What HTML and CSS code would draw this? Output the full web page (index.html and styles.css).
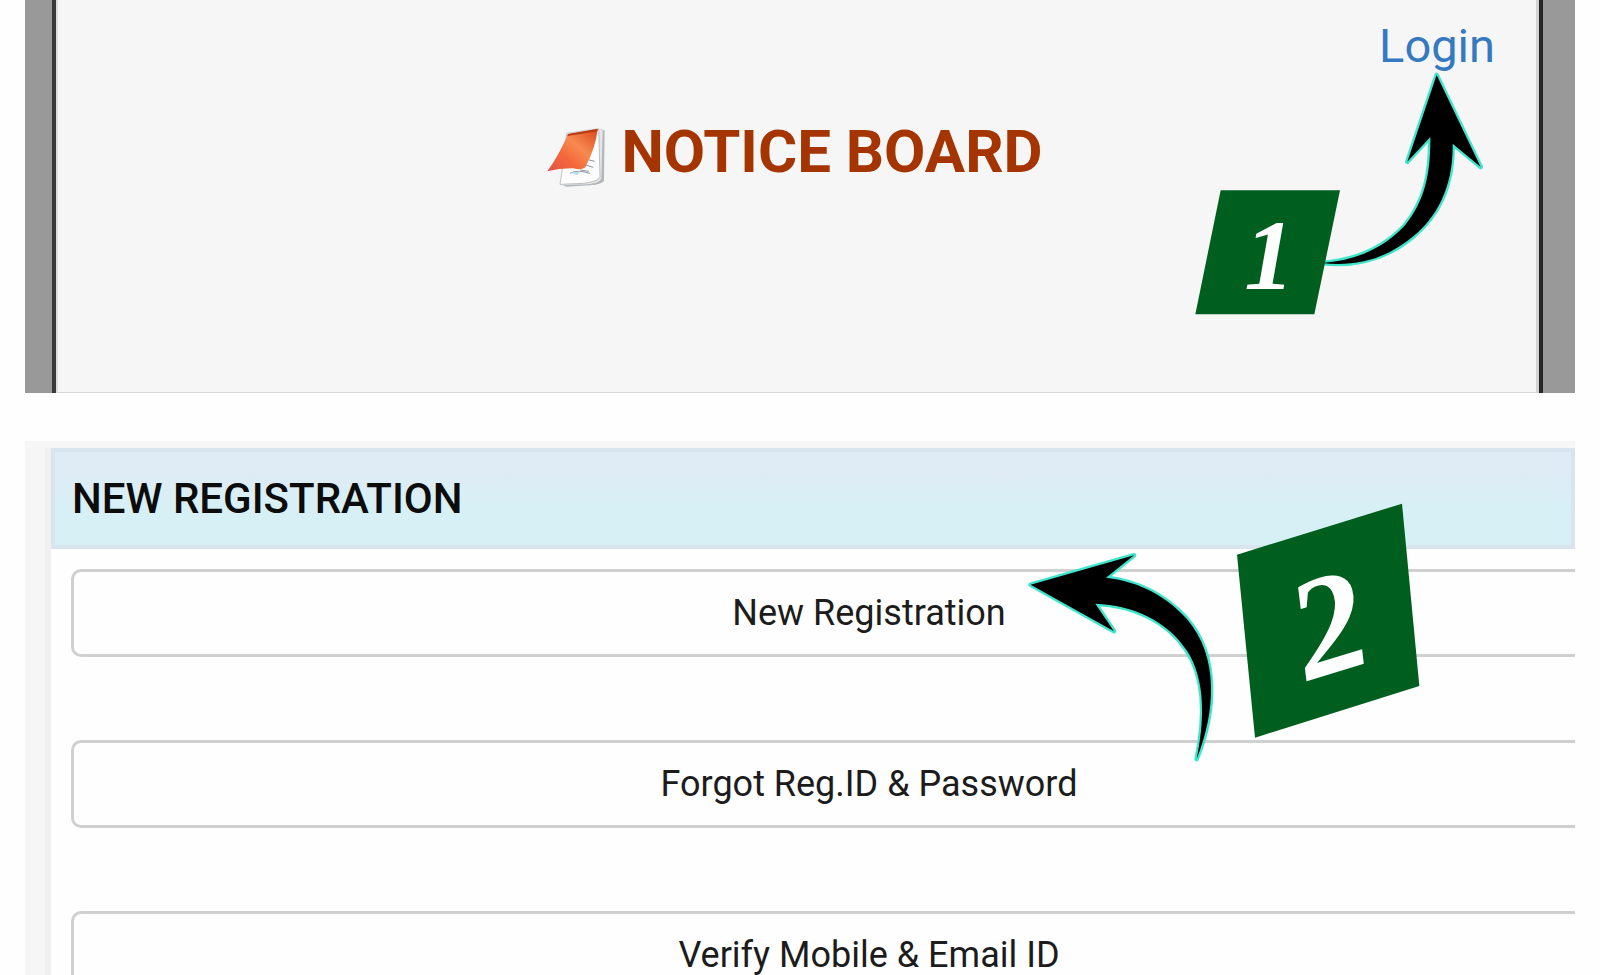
FILE: index.html
```html
<!DOCTYPE html>
<html lang="en">
<head>
<meta charset="utf-8">
<meta name="viewport" content="width=device-width, initial-scale=1">
<title>Notice Board</title>
<link rel="stylesheet" href="styles.css">
</head>
<body>
<main class="page">
  <section class="notice">
    <nav class="notice-nav"><a class="login" href="#login">Login</a></nav>
    <h1 class="notice-title">
      <svg class="pad-icon" viewBox="0 0 225 225" aria-hidden="true">
        <defs>
          <linearGradient id="cover" x1="0" y1="1" x2="1" y2="0">
            <stop offset="0" stop-color="#e0524a"/>
            <stop offset="0.35" stop-color="#f4683a"/>
            <stop offset="0.6" stop-color="#f88a50"/>
            <stop offset="1" stop-color="#d9481c"/>
          </linearGradient>
        </defs>
        <path d="M182 26 L194 32 L192 182 Q188 192 150 196 L80 200 L60 192 Z" fill="#b4b8bc"/>
        <path d="M176 26 L188 30 L184 176 Q180 188 140 193 L62 196 Z" fill="#e4e6e8"/>
        <path d="M80 40 L176 26 L180 172 Q170 186 130 190 L60 193 L68 140 Z" fill="#fcfcfc" stroke="#a8a8a8" stroke-width="2"/>
        <path d="M90 160 Q110 148 150 160 M140 118 L164 124 M134 134 L160 142 M120 150 L146 154" fill="none" stroke="#8d969c" stroke-width="3"/>
        <path d="M92 158 L122 154 L112 166 Z" fill="#b9dcec"/>
        <path d="M84 42 L173 27 Q168 80 136 142 Q124 152 100 145 Q60 144 22 154 Q58 104 84 42 Z" fill="url(#cover)"/>
        <path d="M84 42 L173 27 L172 34 L82 48 Z" fill="#b83a12"/>
      </svg>
      <span>NOTICE BOARD</span>
    </h1>
    <svg class="step step-one" viewBox="30 200 900 750" role="img" aria-label="Step 1">
      <path class="arrow" d="M770 224 L902 500 L818 430 C820 560 770 650 700 708 C620 775 530 800 425 788 C530 780 610 745 675 675 C735 600 752 520 751 410 L682 484 Z"/>
      <path class="badge" d="M122 570 H480 L403 942 H46 Z"/>
      <text class="digit digit-one" x="268" y="865">1</text>
    </svg>
  </section>

  <section class="register">
    <div class="register-body">
      <h2 class="register-title">NEW REGISTRATION</h2>
      <div class="actions">
        <button class="action" type="button">New Registration</button>
        <button class="action" type="button">Forgot Reg.ID &amp; Password</button>
        <button class="action" type="button">Verify Mobile &amp; Email ID</button>
      </div>
    </div>
    <svg class="step step-two" viewBox="60 50 1230 810" role="img" aria-label="Step 2">
      <path class="arrow" d="M92 313 L402 225 L318 292 C425 305 500 350 560 415 C660 530 645 700 590 836 C612 730 620 600 560 510 C500 420 400 375 286 370 L342 453 Z"/>
      <path class="badge" d="M711 223 L1206 70 L1258 617 L765 772 Z"/>
      <text class="digit digit-two" transform="translate(1028 570) rotate(-17)">2</text>
    </svg>
  </section>
</main>
</body>
</html>
```
FILE: styles.css
```css
* { box-sizing: border-box; }

body {
  margin: 0;
  background: #fefefe;
  font-family: Roboto, "Liberation Sans", sans-serif;
}

.page {
  display: flex;
  flex-direction: column;
  gap: 48px;
  height: 100vh;
  padding: 0 25px;
  overflow: hidden;
}

.notice,
.register {
  position: relative;
  flex: none;
}

.notice {
  min-height: 393px;
  padding: 16px 48px 0 4px;
  border-left: 27px solid #999;
  border-right: 32px solid #999;
  background: #f6f6f6;
  box-shadow: inset 4px 0 #3a3a3a, inset -4px 0 #262626, inset 6px 0 #ddd, inset -7px 0 #d4d4d4, inset 0 -1px #d8d8d8;
}

.notice-nav {
  display: flex;
  justify-content: flex-end;
}

.login {
  color: #3579c0;
  font-size: 47px;
  line-height: 60px;
  text-decoration: none;
}

.notice-title {
  display: flex;
  align-items: flex-start;
  justify-content: center;
  gap: 6px;
  margin: 40px 0 0;
  padding-left: 32px;
  color: #a43500;
  font-size: 60px;
  font-weight: 700;
  line-height: 72px;
}

.pad-icon {
  width: 75px;
  height: 75px;
  margin-top: 4px;
}

.register {
  min-height: 534px;
  padding: 7px 0 0 20px;
  overflow: hidden;
  background: #f6f6f6;
}

.register-body {
  border-left: 6px solid #f0f0f0;
  background: #fefefe;
}

.register-title {
  margin: 0;
  padding: 24px 17px;
  border: 4px solid #d8e5ee;
  background: linear-gradient(#dfebf5 20%, #d7f0f5 60%);
  color: #0c0c0c;
  font-size: 42px;
  font-weight: 500;
  line-height: 45px;
}

.actions {
  display: grid;
  gap: 83px;
  margin-right: -92px;
  padding: 20px 0 40px 20px;
}

.action {
  height: 88px;
  padding: 0;
  border: 3px solid #d0d0d0;
  border-radius: 10px;
  background: #fefefe;
  color: #1c1c1c;
  font-family: inherit;
  font-size: 36px;
  line-height: 36px;
}

.step {
  position: absolute;
  pointer-events: none;
}

.step-one {
  top: 67px;
  right: 53px;
  width: 300px;
}

.step-two {
  top: 56px;
  right: 145px;
  width: 410px;
}

.arrow {
  fill: #000;
  stroke: #3fe5cb;
  stroke-width: 14px;
  stroke-linejoin: round;
  paint-order: stroke;
}

.badge { fill: #005f1f; }

.digit {
  fill: #fefefe;
  font-family: "Liberation Serif", serif;
  font-style: italic;
  font-weight: 700;
  text-anchor: middle;
}

.digit-one { font-size: 300px; }

.digit-two { font-size: 432px; }
```
